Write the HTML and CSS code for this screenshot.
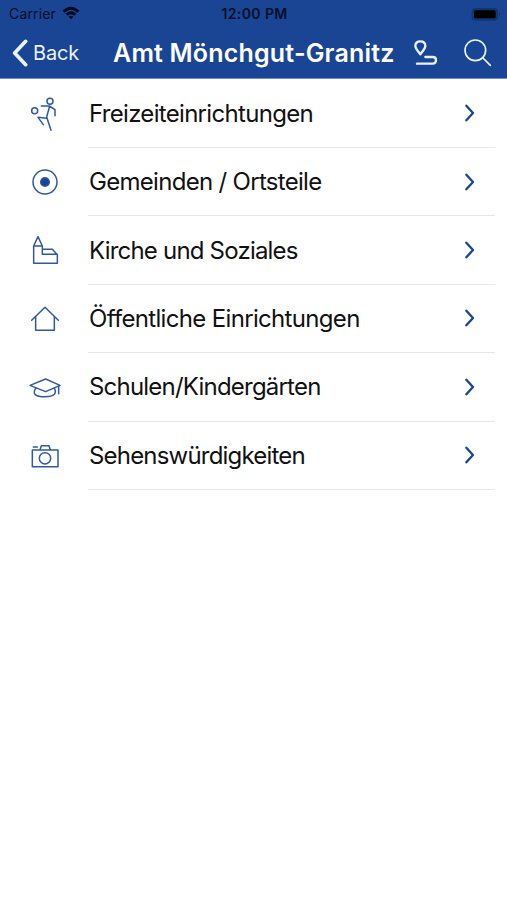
FILE: index.html
```html
<!DOCTYPE html>
<html lang="de">
<head>
<meta charset="utf-8">
<title>Amt Mönchgut-Granitz</title>
<link rel="stylesheet" href="styles.css">
</head>
<body>
<header class="header">
  <div class="status">
    <div class="carrier"><span class="carrier-name">Carrier</span>
      <svg class="wifi" viewBox="0 0 54 42"><path d="M2 14Q27-9 52 14L46 20Q27 2 8 20ZM11 23Q27 9 43 23L37 29Q27 20 17 29ZM20 32Q27 26 34 32L27 40Z"/></svg>
    </div>
    <span class="clock">12:00 PM</span>
    <svg class="battery" viewBox="0 0 90 48"><rect x="2" y="6" width="79" height="38" rx="12"/><rect class="charge" x="9" y="13" width="65" height="24" rx="5"/><path d="M84 17q6 8 0 16z"/></svg>
  </div>
  <div class="nav">
    <a class="back"><svg class="back-icon" viewBox="0 0 48 84"><path d="M41 7L8 42L41 77"/></svg><span class="back-label">Back</span></a>
    <h1 class="title">Amt Mönchgut-Granitz</h1>
    <svg class="route" viewBox="0 0 78 84"><path d="M22 43C16 34 7 26 7 18C7 9 13 4 22 4C31 4 37 9 37 18C37 26 28 34 22 43ZM37 51H59C67 51 69 54 69 60C69 67 66 71 59 71H12"/></svg>
    <svg class="search" viewBox="0 0 84 84"><circle cx="34" cy="34" r="31"/><path d="M57 57L79 79"/></svg>
  </div>
</header>
<main class="list">
  <a class="row">
    <svg class="icon" viewBox="0 0 150 150"><circle cx="90" cy="37" r="9"/><circle cx="44" cy="65" r="9"/><path d="M64 51H88L105 62V80M89 51L80 84L93 124M80 88L54 85L70 107"/></svg>
    <span class="body"><span class="label l1">Freizeiteinrichtungen</span><svg class="chevron" viewBox="0 0 36 54"><path d="M7 5L27 27L7 49"/></svg></span>
  </a>
  <a class="row">
    <svg class="icon" viewBox="0 0 150 150"><circle cx="75" cy="75" r="36"/><circle class="dot" cx="75" cy="75" r="13"/></svg>
    <span class="body"><span class="label l2">Gemeinden / Ortsteile</span><svg class="chevron" viewBox="0 0 36 54"><path d="M7 5L27 27L7 49"/></svg></span>
  </a>
  <a class="row">
    <svg class="icon" viewBox="0 0 150 150"><path d="M41 60L54 32L67 60V85H112V112H41ZM41 60H67M67 70H97L112 86"/></svg>
    <span class="body"><span class="label l3">Kirche und Soziales</span><svg class="chevron" viewBox="0 0 36 54"><path d="M7 5L27 27L7 49"/></svg></span>
  </a>
  <a class="row">
    <svg class="icon" viewBox="0 0 150 150"><path d="M35 79L75 40L115 79M47 68V109H103V68"/></svg>
    <span class="body"><span class="label l4">Öffentliche Einrichtungen</span><svg class="chevron" viewBox="0 0 36 54"><path d="M7 5L27 27L7 49"/></svg></span>
  </a>
  <a class="row">
    <svg class="icon" viewBox="0 0 150 150"><path d="M30 70L77 51L120 70L77 89ZM47 78C42 88 42 94 45 97C56 107 94 107 103 97C107 92 107 86 103 78M116 72V95"/></svg>
    <span class="body"><span class="label l5">Schulen/Kindergärten</span><svg class="chevron" viewBox="0 0 36 54"><path d="M7 5L27 27L7 49"/></svg></span>
  </a>
  <a class="row">
    <svg class="icon" viewBox="0 0 150 150"><path d="M37 57H114V107H37ZM60 57L64 44H87L91 57M40 48H52"/><circle cx="75" cy="82" r="17"/></svg>
    <span class="body"><span class="label l6">Sehenswürdigkeiten</span><svg class="chevron" viewBox="0 0 36 54"><path d="M7 5L27 27L7 49"/></svg></span>
  </a>
</main>
</body>
</html>
```
FILE: styles.css
```css
* { box-sizing: border-box; }
body { margin: 0; background: #fff; color: #111; font-family: Inter, "Liberation Sans", sans-serif; }
svg { display: block; flex: none; fill: none; stroke-linecap: round; stroke-linejoin: round; }
.header { height: 79px; background: #194594; border-bottom: 1px solid #6a8dcc; }
.status { display: grid; grid-template-columns: 1fr auto 1fr; align-items: center; height: 27px; padding: 0 6px 0 8px; color: #05102a; font-size: 14px; line-height: 27px; }
.carrier { display: flex; align-items: center; gap: 6px; padding-left: 1px; }
.carrier-name { letter-spacing: 0.15px; }
.wifi { width: 18px; height: 14px; fill: #020a1c; margin-top: -1px; }
.clock { font-weight: 600; letter-spacing: 0.4px; }
.battery { width: 30px; height: 16px; fill: #123470; justify-self: end; }
.battery .charge { fill: #000; }
.nav { display: flex; align-items: center; height: 51px; padding: 0 14px 0 12px; color: #fff; }
.nav svg { stroke: #e9f2ff; }
.back { display: flex; align-items: center; gap: 5px; width: 101px; }
.back-icon { width: 16px; height: 28px; stroke-width: 11; }
.back-label { font-size: 20px; letter-spacing: -0.2px; color: #e9f2ff; }
.title { width: 300px; margin: 0; font-size: 25px; font-weight: 600; letter-spacing: 0.19px; white-space: nowrap; }
.route { width: 26px; height: 28px; stroke-width: 7; margin: 2px 25px 0 0; }
.search { width: 28px; height: 28px; stroke-width: 5; }
.list { display: flex; flex-direction: column; padding-top: 0.6px; }
.row { display: flex; align-items: center; height: 68.4px; padding: 0 12px 0 20px; }
.icon { width: 50px; height: 50px; margin-right: 18px; stroke: #3158a3; stroke-width: 4.5; }
.icon .dot { fill: #194594; }
.body { display: flex; flex: 1; align-items: center; justify-content: space-between; height: 100%; padding: 0 19px 0 1px; border-bottom: 1px solid #e6e6e6; }
.label { font-size: 24px; white-space: nowrap; }
.l1 { letter-spacing: -0.69px; }
.l2 { letter-spacing: -0.7px; }
.l3 { letter-spacing: -0.8px; }
.l4 { letter-spacing: -0.67px; }
.l5 { letter-spacing: -0.79px; }
.l6 { letter-spacing: -0.8px; }
.chevron { width: 12px; height: 18px; stroke: #194594; stroke-width: 7; }
```
